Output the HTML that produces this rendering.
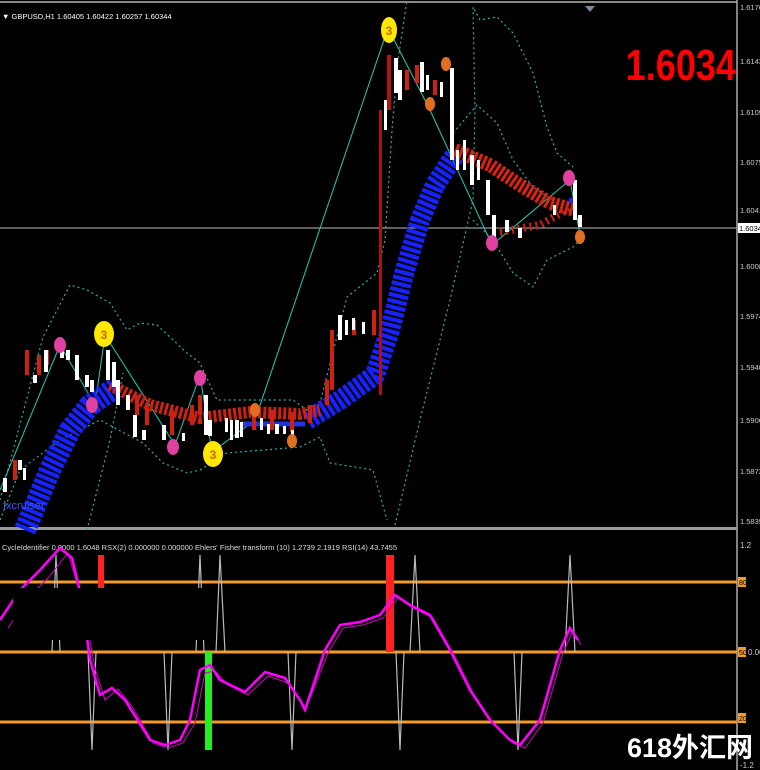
<!DOCTYPE html>
<html><head><meta charset="utf-8"><style>
html,body{margin:0;padding:0;background:#000;width:760px;height:770px;overflow:hidden}
svg{display:block}
text{font-family:"Liberation Sans","Noto Sans CJK SC",sans-serif}
</style></head><body>
<svg width="760" height="770" viewBox="0 0 760 770" xmlns="http://www.w3.org/2000/svg">
<rect width="760" height="770" fill="#000"/>
<rect x="0" y="1" width="737" height="2" fill="#888"/>
<line x1="737" y1="0" x2="737" y2="770" stroke="#aaa" stroke-width="1.5"/>
<rect x="0" y="527" width="737" height="3" fill="#999"/>
<polygon points="585,6 595,6 590,12" fill="#7a8aa0"/>
<text x="2" y="19" fill="#fff" font-size="7.5">▼ GBPUSD,H1  1.60405 1.60422 1.60257 1.60344</text>
<line x1="0" y1="228" x2="737" y2="228" stroke="#bbb" stroke-width="1"/>
<g fill="none" stroke="#3aa" stroke-width="1.2" stroke-dasharray="2,3">
<polyline points="0,500 43,337 70,285 87,290 110,303 127,330 140,323 157,325 187,353 200,363 217,400 233,400 293,400 307,410 320,403 347,297 377,273 385,240 392,130 398,60 407,0"/>
<polyline points="0,520 20,470 60,440 100,420 143,443 163,463 187,473 200,470 227,453 300,447 320,437 330,463 373,470 387,520"/>
<polyline points="87,530 110,440 123,373"/>
<polyline points="395,525 420,420 450,300 473,200 475,110 473,7 480,20 497,17 513,33 533,73 547,127 557,153 573,167"/>
<polyline points="453,133 477,105 497,123 513,160 533,187 557,203"/>
<polyline points="473,220 493,240 513,273 533,287 547,260 573,247 580,240"/>
</g>
<polyline points="0,490 60,345 95,405 105,335 175,445 200,375 212,452 255,420 388,28 430,110 492,245 570,180 580,235" fill="none" stroke="#2cb" stroke-width="1"/>
<polyline points="25,530 50,470 70,430 90,405 115,388" fill="none" stroke="#1622ff" stroke-width="22" stroke-dasharray="4,2"/>
<polyline points="307,420 340,400 375,375 390,330 405,270 420,220 435,185 455,155" fill="none" stroke="#1622ff" stroke-width="20" stroke-dasharray="4,2"/>
<polyline points="240,424 305,424" fill="none" stroke="#2233dd" stroke-width="5"/>
<polyline points="110,385 150,405 200,418 250,412 300,414 320,410" fill="none" stroke="#c21" stroke-width="12" stroke-dasharray="3,2"/>
<polyline points="455,150 490,165 520,185 550,203 575,210" fill="none" stroke="#d21" stroke-width="14" stroke-dasharray="3,2"/>
<polyline points="500,232 540,225 575,205" fill="none" stroke="#c21" stroke-width="8" stroke-dasharray="2,4"/>
<rect x="379" y="110" width="3" height="285" fill="#a81212"/>
<rect x="387" y="55" width="4" height="55" fill="#b01515"/>
<g fill="#c21">
<rect x="330" y="330" width="4" height="60"/><rect x="325" y="380" width="4" height="25"/><rect x="352" y="320" width="4" height="15"/><rect x="372" y="310" width="4" height="25"/>
<rect x="405" y="70" width="4" height="20"/><rect x="415" y="65" width="4" height="18"/><rect x="433" y="80" width="4" height="15"/>
<rect x="25" y="350" width="4" height="25"/><rect x="37" y="355" width="4" height="20"/><rect x="45" y="350" width="4" height="15"/>
<rect x="13" y="460" width="4" height="20"/><rect x="135" y="395" width="4" height="20"/><rect x="145" y="405" width="4" height="20"/>
<rect x="170" y="410" width="4" height="25"/><rect x="190" y="405" width="4" height="20"/><rect x="198" y="395" width="4" height="20"/>
<rect x="252" y="410" width="4" height="20"/><rect x="270" y="410" width="4" height="20"/><rect x="290" y="412" width="4" height="20"/><rect x="308" y="405" width="4" height="18"/>
</g>
<g fill="#fff">
<rect x="3" y="478" width="4" height="14"/><rect x="18" y="460" width="4" height="10"/><rect x="23" y="468" width="3" height="12"/>
<rect x="33" y="375" width="4" height="8"/><rect x="44" y="350" width="4" height="22"/><rect x="60" y="348" width="4" height="10"/><rect x="66" y="350" width="4" height="10"/>
<rect x="75" y="355" width="4" height="25"/><rect x="85" y="375" width="4" height="12"/><rect x="90" y="380" width="4" height="12"/>
<rect x="106" y="350" width="4" height="30"/><rect x="112" y="362" width="4" height="25"/><rect x="116" y="380" width="4" height="25"/><rect x="126" y="395" width="4" height="15"/>
<rect x="133" y="415" width="4" height="22"/><rect x="142" y="430" width="4" height="10"/><rect x="162" y="425" width="4" height="15"/>
<rect x="182" y="433" width="3" height="8"/><rect x="204" y="395" width="4" height="40"/><rect x="208" y="420" width="4" height="16"/>
<rect x="225" y="418" width="3" height="14"/><rect x="230" y="420" width="3" height="20"/><rect x="235" y="420" width="4" height="18"/><rect x="240" y="422" width="3" height="15"/>
<rect x="260" y="418" width="3" height="12"/><rect x="267" y="424" width="3" height="10"/><rect x="275" y="424" width="4" height="10"/><rect x="283" y="426" width="3" height="8"/><rect x="291" y="430" width="3" height="12"/>
<rect x="338" y="315" width="4" height="25"/><rect x="345" y="320" width="3" height="15"/><rect x="352" y="318" width="3" height="12"/><rect x="362" y="322" width="3" height="12"/>
<rect x="384" y="100" width="3" height="30"/><rect x="394" y="58" width="4" height="35"/><rect x="398" y="70" width="4" height="30"/>
<rect x="420" y="62" width="4" height="30"/><rect x="426" y="75" width="3" height="15"/><rect x="440" y="82" width="3" height="15"/><rect x="450" y="68" width="4" height="92"/>
<rect x="456" y="150" width="3" height="20"/><rect x="463" y="140" width="3" height="30"/><rect x="470" y="155" width="4" height="30"/><rect x="477" y="160" width="3" height="20"/>
<rect x="486" y="180" width="4" height="35"/><rect x="492" y="215" width="4" height="25"/><rect x="505" y="220" width="4" height="12"/><rect x="518" y="228" width="4" height="10"/>
<rect x="553" y="205" width="3" height="10"/><rect x="573" y="180" width="4" height="40"/><rect x="578" y="215" width="4" height="12"/>
</g>
<g fill="#22f"><rect x="569" y="198" width="4" height="6"/></g>
<g font-size="12" font-weight="bold" text-anchor="middle">
<ellipse cx="104" cy="334" rx="10" ry="13" fill="#ffe800"/><text x="104" y="339" fill="#c60">3</text>
<ellipse cx="213" cy="454" rx="10" ry="13" fill="#ffe800"/><text x="213" y="459" fill="#c60">3</text>
<ellipse cx="389" cy="30" rx="8" ry="13" fill="#ffe800"/><text x="389" y="35" fill="#c60">3</text>
</g>
<g fill="#e040a0"><ellipse cx="60" cy="345" rx="6" ry="8"/><ellipse cx="92" cy="405" rx="6" ry="8"/><ellipse cx="173" cy="447" rx="6" ry="8"/><ellipse cx="200" cy="378" rx="6" ry="8"/><ellipse cx="492" cy="243" rx="6" ry="8"/><ellipse cx="569" cy="178" rx="6" ry="8"/></g>
<g fill="#e07020"><ellipse cx="430" cy="104" rx="5" ry="7"/><ellipse cx="446" cy="64" rx="5" ry="7"/><ellipse cx="255" cy="410" rx="5" ry="7"/><ellipse cx="292" cy="441" rx="5" ry="7"/><ellipse cx="580" cy="237" rx="5" ry="7"/></g>
<text x="3" y="509" fill="#3a5aff" font-size="11" font-family="Liberation Mono">fxcruiser</text>
<text x="736" y="80" fill="#f00" font-size="44" font-weight="bold" text-anchor="end" transform="translate(736,0) scale(0.82,1) translate(-736,0)">1.6034</text>
<g fill="#ccc" font-size="7.5">
<text x="740" y="10">1.61760</text><text x="740" y="64">1.61430</text><text x="740" y="115">1.61090</text>
<text x="740" y="165">1.60750</text><text x="740" y="213">1.60410</text><text x="740" y="269">1.60080</text>
<text x="740" y="319">1.59740</text><text x="740" y="370">1.59400</text><text x="740" y="423">1.59060</text>
<text x="740" y="474">1.58720</text><text x="740" y="524">1.58390</text>
</g>
<rect x="738" y="223" width="22" height="10" fill="#fff"/><text x="739" y="231" fill="#000" font-size="7.5">1.60344</text>
<text x="2" y="550" fill="#ddd" font-size="7.5">CycleIdentifier 0.0000 1.6048  RSX(2) 0.000000 0.000000  Ehlers' Fisher transform (10) 1.2739 2.1919  RSI(14) 43.7455</text>
<g stroke="#f39a2a" stroke-width="3"><line x1="0" y1="582" x2="737" y2="582"/><line x1="0" y1="652" x2="737" y2="652"/><line x1="0" y1="722" x2="737" y2="722"/></g>
<g fill="none" stroke="#bbb" stroke-width="1.2">
<polyline points="52,652 56,555 60,652"/><polyline points="196,652 200,555 204,652"/><polyline points="216,652 220,555 225,652"/>
<polyline points="410,652 415,555 420,652"/><polyline points="565,652 570,555 575,652"/>
<polyline points="88,652 92,750 96,652"/><polyline points="164,652 168,750 172,652"/><polyline points="288,652 292,750 296,652"/>
<polyline points="514,652 518,750 522,652"/><polyline points="396,652 400,750 404,652"/>
</g>
<rect x="98" y="555" width="6" height="35" fill="#f22"/>
<rect x="386" y="555" width="8" height="97" fill="#f22"/>
<rect x="205" y="652" width="7" height="98" fill="#2e2"/>
<polyline points="5,625 25,595 45,575 65,550 80,600 92,665 102,697 115,686 130,705 150,740 165,745 180,740 192,720 202,670 212,668 225,682 245,692 265,673 285,680 303,705 325,650 340,625 360,622 380,615 395,595 410,605 430,615 450,650 470,690 490,720 510,740 522,745 540,720 560,650 570,628 578,642" fill="none" stroke="#d000c0" stroke-width="1" transform="translate(3,3)"/>
<polyline points="0,620 20,590 40,570 60,548 72,558 82,600 90,660 100,695 112,688 125,700 150,740 165,745 180,740 190,720 200,670 210,665 220,680 245,692 265,672 285,678 300,700 305,710 325,650 340,625 360,622 380,615 395,595 410,605 430,615 450,650 470,690 490,720 510,740 520,745 540,720 560,650 570,628 578,640" fill="none" stroke="#f0f" stroke-width="2.5"/>
<rect x="13" y="588" width="195" height="52" fill="#000"/>
<g fill="#ccc" font-size="8"><text x="740" y="548">1.2</text><text x="740" y="768">-1.2</text><text x="748" y="655">0.00</text></g>
<g fill="#f39a2a"><rect x="738" y="577" width="8" height="10"/><rect x="738" y="647" width="8" height="10"/><rect x="738" y="713" width="8" height="10"/></g>
<g fill="#000" font-size="7"><text x="739" y="585">80</text><text x="739" y="655">50</text><text x="739" y="721">20</text></g>
<text x="627" y="757" fill="#fff" font-size="27" font-weight="bold">618外汇网</text>
</svg>
</body></html>
